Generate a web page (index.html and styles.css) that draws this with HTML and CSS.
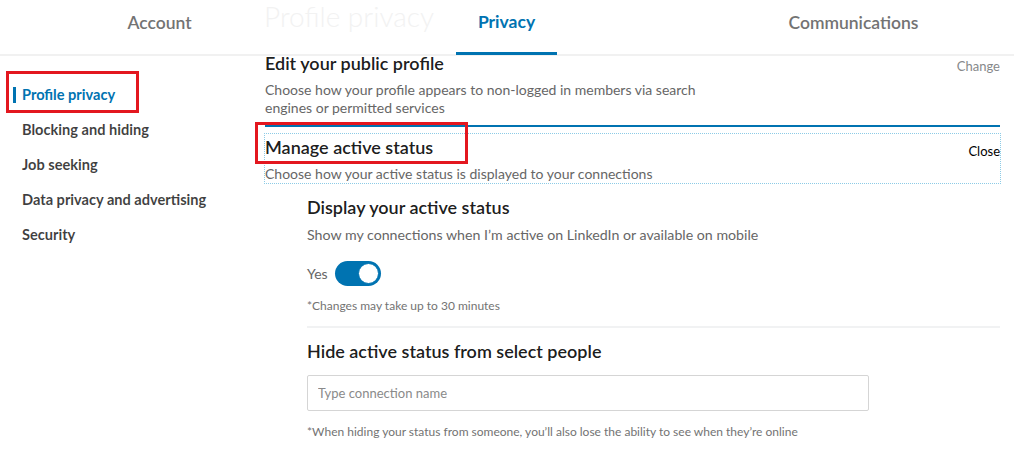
FILE: index.html
```html
<!DOCTYPE html>
<html lang="en">
<head>
  <meta charset="UTF-8">
  <title>Settings - Privacy</title>
  <link rel="stylesheet" href="styles.css">
</head>
<body>
<!-- Top tabs -->
<div class="Tabs">
  <div class="Tabs__Item">Account</div>
  <div class="Tabs__Item Tabs__Item--active"><span>Privacy</span></div>
  <div class="Tabs__Item">Communications</div>
</div>
<div class="GhostTitle">Profile privacy</div>

<div class="Layout">
  <ul class="Nav">
    <li class="Nav__Item Nav__Item--active">Profile privacy</li>
    <li class="Nav__Item">Blocking and hiding</li>
    <li class="Nav__Item">Job seeking</li>
    <li class="Nav__Item">Data privacy and advertising</li>
    <li class="Nav__Item">Security</li>
  </ul>

  <div class="Main">
    <div class="Setting">
      <div class="Setting__Head">
        <h2 class="Setting__Title">Edit your public profile</h2>
        <span class="Setting__Action Setting__Action--muted">Change</span>
      </div>
      <p class="Setting__Desc">Choose how your profile appears to non-logged in members via search<br>engines or permitted services</p>
    </div>

    <div class="Setting Setting--open">
      <div class="Setting__Head">
        <h2 class="Setting__Title">Manage active status</h2>
        <span class="Setting__Action">Close</span>
      </div>
      <p class="Setting__Desc">Choose how your active status is displayed to your connections</p>
    </div>

    <div class="Panel">
      <h3 class="Panel__Title">Display your active status</h3>
      <p class="Panel__Text">Show my connections when I’m active on LinkedIn or available on mobile</p>
      <div class="Toggle">
        <span class="Toggle__Label">Yes</span>
        <span class="Toggle__Switch"><span class="Toggle__Knob"></span></span>
      </div>
      <p class="Panel__Note">*Changes may take up to 30 minutes</p>

      <div class="Panel__Divider"></div>

      <h3 class="Panel__Title">Hide active status from select people</h3>
      <input class="Panel__Input" type="text" placeholder="Type connection name">
      <p class="Panel__Note Panel__Note--last">*When hiding your status from someone, you’ll also lose the ability to see when they’re online</p>
    </div>
  </div>
</div>

<!-- Red annotation boxes drawn over the screenshot -->
<div class="Mark Mark--nav"></div>
<div class="Mark Mark--status"></div>
</body>
</html>
```

FILE: styles.css
```css
html, body {
  margin: 0;
  padding: 0;
  background: #ffffff;
  font-family: Lato, "Liberation Sans", Arial, sans-serif;
  color: rgba(0, 0, 0, 0.9);
}

body {
  position: relative;
  width: 1014px;
  height: 450px;
  overflow: hidden;
}

p, h2, h3, ul {
  margin: 0;
  padding: 0;
}

.Tabs {
  display: grid;
  grid-template-columns: repeat(3, 347px);
  margin-left: -14px;
  height: 54px;
  border-bottom: 2px solid #f1f1f1;
}

.Tabs__Item {
  display: flex;
  justify-content: center;
  align-items: center;
  padding-bottom: 9px;
  font-size: 17.5px;
  font-weight: 600;
  color: #737373;
}

.Tabs__Item--active {
  color: #0073b1;
  font-weight: 700;
  padding-bottom: 0;
  align-items: stretch;
}

.Tabs__Item--active span {
  display: flex;
  align-items: center;
  justify-content: center;
  width: 101px;
  padding-bottom: 9px;
  border-bottom: 3px solid #0073b1;
  margin-bottom: -1px;
}

.GhostTitle {
  position: absolute;
  left: 264px;
  top: 1px;
  font-size: 28px;
  line-height: 30px;
  font-weight: 300;
  color: #f2f2f2;
}

.Layout {
  display: flex;
}

.Nav {
  list-style: none;
  width: 265px;
  flex-shrink: 0;
  padding-top: 26px;
}

.Nav__Item {
  height: 35px;
  line-height: 26px;
  padding-left: 22px;
  font-size: 14.6px;
  font-weight: 700;
  color: rgba(0, 0, 0, 0.75);
}

.Nav__Item--active {
  color: #0073b1;
  position: relative;
}

.Nav__Item--active::before {
  content: "";
  position: absolute;
  left: 13px;
  top: 5px;
  width: 3px;
  height: 16px;
  background: #0073b1;
}

.Main {
  width: 735px;
}

.Setting {
  border-bottom: 2px solid #0073b1;
  padding-bottom: 8px;
  margin-top: -3px;
}

.Setting__Head {
  display: flex;
  justify-content: space-between;
  align-items: flex-start;
}

.Setting__Title {
  font-size: 18px;
  line-height: 20px;
  font-weight: 600;
}

.Setting__Action {
  font-size: 13px;
  line-height: 20px;
  padding-top: 3px;
  color: #000000;
}

.Setting__Action--muted {
  color: #86888a;
}

.Setting__Desc {
  margin-top: 5px;
  font-size: 14px;
  line-height: 18px;
  color: #666666;
}

.Setting--open {
  border: 1px dotted #8ccbe6;
  margin: 6px -1px 0 -1px;
  padding: 3px 0 0 0;
}

.Setting--open .Setting__Action {
  padding-top: 4px;
}

.Setting--open .Setting__Desc {
  margin-top: 4px;
}

.Panel {
  padding: 12px 0 0 42px;
}

.Panel__Title {
  font-size: 18px;
  line-height: 22px;
  font-weight: 600;
}

.Panel__Text {
  margin-top: 7px;
  font-size: 14.2px;
  line-height: 20px;
  color: #666666;
}

.Toggle {
  display: flex;
  align-items: center;
  gap: 7px;
  margin-top: 16px;
}

.Toggle__Label {
  font-size: 14px;
  color: #666666;
}

.Toggle__Switch {
  display: flex;
  justify-content: flex-end;
  align-items: center;
  width: 46px;
  height: 25px;
  box-sizing: border-box;
  padding: 2px;
  border-radius: 13px;
  background: #0073b1;
}

.Toggle__Knob {
  width: 21px;
  height: 21px;
  box-sizing: border-box;
  border-radius: 50%;
  background: #ffffff;
  border: 1px solid #0073b1;
}

.Panel__Note {
  margin-top: 12px;
  font-size: 12px;
  line-height: 16px;
  color: #737373;
}

.Panel__Divider {
  height: 2px;
  background: #f1f2f3;
  margin: 12px 0 12px 0;
}

.Panel__Input {
  display: block;
  width: 562px;
  height: 36px;
  box-sizing: border-box;
  margin-top: 13px;
  padding: 0 10px;
  border: 1px solid #d5d5d5;
  border-radius: 2px;
  font-family: inherit;
  font-size: 13px;
}

.Panel__Input::placeholder {
  color: #8a8a8a;
}

.Panel__Note--last {
  margin-top: 13px;
}

.Mark {
  position: absolute;
  border: 3px solid #e3171f;
  box-sizing: border-box;
}

.Mark--nav {
  left: 6px;
  top: 71px;
  width: 133px;
  height: 42px;
}

.Mark--status {
  left: 255px;
  top: 122px;
  width: 213px;
  height: 42px;
}
```
